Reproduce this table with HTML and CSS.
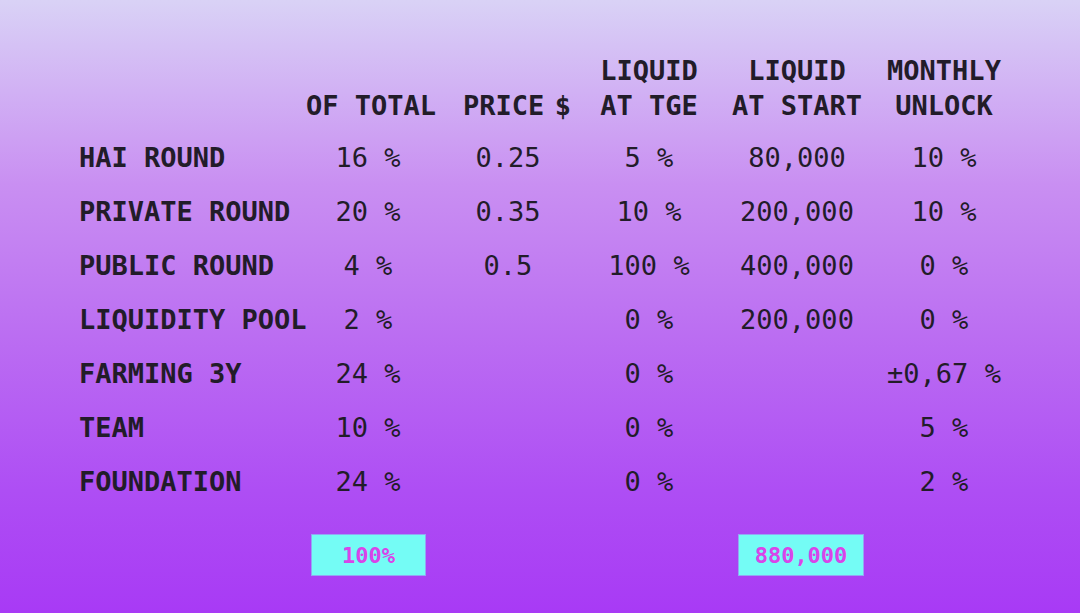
FILE: index.html
```html
<!DOCTYPE html>
<html lang="en">
<head>
<meta charset="utf-8">
<title>Tokenomics</title>
<link rel="stylesheet" href="styles.css">
</head>
<body>
<main class="page">
  <div class="table">
    <div class="head label"></div>
    <div class="head">OF TOTAL</div>
    <div class="head head-price">PRICE $</div>
    <div class="head">LIQUID<br>AT TGE</div>
    <div class="head">LIQUID<br>AT START</div>
    <div class="head">MONTHLY<br>UNLOCK</div>

    <div class="label">HAI ROUND</div><div class="cell c2">16 %</div><div class="cell c3">0.25</div><div class="cell">5 %</div><div class="cell">80,000</div><div class="cell">10 %</div>
    <div class="label">PRIVATE ROUND</div><div class="cell c2">20 %</div><div class="cell c3">0.35</div><div class="cell">10 %</div><div class="cell">200,000</div><div class="cell">10 %</div>
    <div class="label">PUBLIC ROUND</div><div class="cell c2">4 %</div><div class="cell c3">0.5</div><div class="cell">100 %</div><div class="cell">400,000</div><div class="cell">0 %</div>
    <div class="label">LIQUIDITY POOL</div><div class="cell c2">2 %</div><div class="cell c3"></div><div class="cell">0 %</div><div class="cell">200,000</div><div class="cell">0 %</div>
    <div class="label">FARMING 3Y</div><div class="cell c2">24 %</div><div class="cell c3"></div><div class="cell">0 %</div><div class="cell"></div><div class="cell">±0,67 %</div>
    <div class="label">TEAM</div><div class="cell c2">10 %</div><div class="cell c3"></div><div class="cell">0 %</div><div class="cell"></div><div class="cell">5 %</div>
    <div class="label">FOUNDATION</div><div class="cell c2">24 %</div><div class="cell c3"></div><div class="cell">0 %</div><div class="cell"></div><div class="cell">2 %</div>

    <div class="total-spacer"></div>
    <div class="total total-pct">100%</div>
    <div class="total-spacer"></div>
    <div class="total-spacer"></div>
    <div class="total total-liq">880,000</div>
    <div class="total-spacer"></div>
  </div>
</main>
</body>
</html>
```

FILE: styles.css
```css
html, body {
  margin: 0;
  padding: 0;
}

body {
  width: 1080px;
  height: 613px;
  overflow: hidden;
  background: linear-gradient(180deg, #d9d2f6 0%, #c98ff2 30%, #bb6df2 55%, #ae4ef4 80%, #a83af5 100%);
  font-family: "DejaVu Sans Mono", "Liberation Mono", monospace;
  color: #221c29;
}

.page {
  padding: 53px 0 0 79px;
}

.table {
  display: grid;
  grid-template-columns: 226px 132px 150px 124px 172px 122px;
  font-size: 27px;
}

.head {
  font-weight: bold;
  line-height: 35px;
  text-align: center;
  align-self: end;
  margin-bottom: 8px;
}

.head-price {
  word-spacing: -6px;
  padding-left: 10px;
}

.label {
  font-weight: bold;
  line-height: 54px;
  white-space: nowrap;
}

.head.label {
  line-height: 35px;
}

.cell {
  line-height: 54px;
  text-align: center;
  white-space: nowrap;
}

.c2 {
  padding-right: 6px;
}

.c3 {
  padding-right: 8px;
}

.total-spacer {
  height: 42px;
  margin-top: 25px;
}

.total {
  margin-top: 25px;
  height: 40px;
  justify-self: center;
  background: #74fcf5;
  border: 1px solid #93a6f3;
  color: #d944e9;
  font-size: 22px;
  font-weight: bold;
  display: flex;
  align-items: center;
  justify-content: center;
}

.total-pct {
  width: 113px;
  margin-left: -5px;
}

.total-liq {
  width: 124px;
  margin-left: 8px;
}
```
